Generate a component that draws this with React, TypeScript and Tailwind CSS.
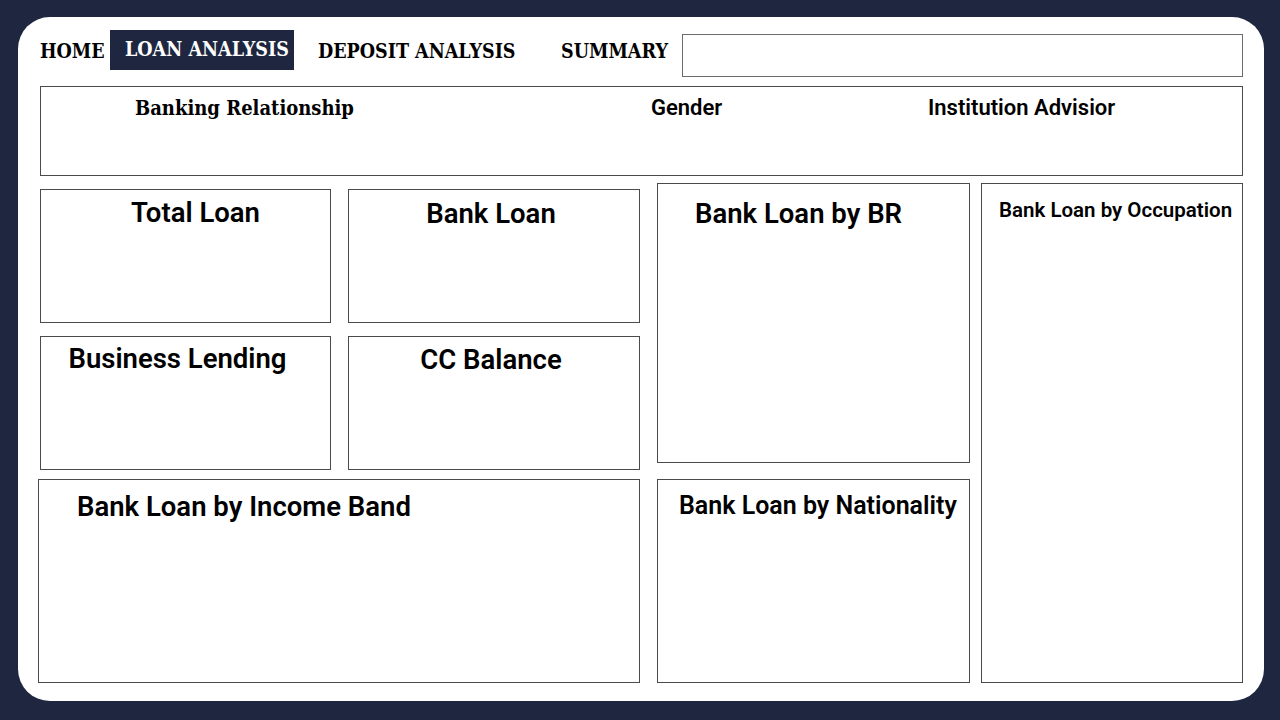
import React from "react";

const serif = "font-['DejaVu_Serif_Condensed','DejaVu_Serif',serif]";
const sans = "font-['Roboto','Liberation_Sans',sans-serif]";

export default function App() {
  return (
    <div className="w-[1280px] h-[720px] bg-[#1e2640] pt-[17px] pl-[18px] overflow-hidden">
      <div className="w-[1246px] h-[684px] bg-white rounded-[32px] flex flex-col">
        {/* Nav */}
        <div className="flex items-start pl-[22px] pt-[13px] h-[69px]">
          <div className={`${serif} font-bold text-[19.5px] text-black h-[40px] flex items-center pt-[3px] w-[70px]`}>HOME</div>
          <div className={`${serif} font-bold text-[19.5px] text-white bg-[#1e2640] h-[40px] w-[184px] flex items-center pl-[15px] pb-[1px] whitespace-nowrap`}>
            LOAN ANALYSIS
          </div>
          <div className={`${serif} font-bold text-[19.5px] text-black h-[40px] flex items-center pt-[3px] ml-[24px] w-[243px]`}>DEPOSIT ANALYSIS</div>
          <div className={`${serif} font-bold text-[19.5px] text-black h-[40px] flex items-center pt-[3px] w-[121px]`}>SUMMARY</div>
          <div className="mt-[4px] w-[561px] h-[43px] border border-[#6b6b6b]" />
        </div>

        {/* Filter box */}
        <div className="ml-[22px] w-[1203px] h-[90px] border border-[#4b4b4b] flex items-start pt-[6px]">
          <div className={`${serif} font-bold text-[20px] text-black ml-[94px] w-[516px]`}>Banking Relationship</div>
          <div className={`${sans} font-semibold text-[22px] leading-[30px] text-black w-[277px]`}>Gender</div>
          <div className={`${sans} font-semibold text-[22px] leading-[30px] text-black`}>Institution Advisior</div>
        </div>

        {/* Main */}
        <div className="flex items-start pl-[20px] mt-[7px]">
          {/* Left column */}
          <div className="w-[602px] flex flex-col">
            <div className="ml-[2px] mt-[6px] grid grid-cols-[291px_292px] grid-rows-[134px_134px] gap-x-[17px] gap-y-[13px]">
              <div className="border border-[#4b4b4b]">
                <div className={`${sans} font-semibold text-[27.5px] text-black text-center pl-[20px] pt-[5px] leading-[36px]`}>Total Loan</div>
              </div>
              <div className="border border-[#4b4b4b]">
                <div className={`${sans} font-semibold text-[27.5px] text-black text-center pr-[6px] pt-[6px] leading-[36px]`}>Bank Loan</div>
              </div>
              <div className="border border-[#4b4b4b]">
                <div className={`${sans} font-semibold text-[27.5px] text-black text-center pr-[16px] pt-[4px] leading-[36px] whitespace-nowrap`}>Business Lending</div>
              </div>
              <div className="border border-[#4b4b4b]">
                <div className={`${sans} font-semibold text-[27.5px] text-black text-center pr-[6px] pt-[5px] leading-[36px]`}>CC Balance</div>
              </div>
            </div>
            <div className="mt-[9px] h-[204px] border border-[#4b4b4b]">
              <div className={`${sans} font-semibold text-[27.5px] text-black pl-[38px] pt-[9px] leading-[36px]`}>Bank Loan by Income Band</div>
            </div>
          </div>

          {/* Middle column */}
          <div className="ml-[17px] w-[313px] flex flex-col">
            <div className="h-[280px] border border-[#4b4b4b]">
              <div className={`${sans} font-semibold text-[27.5px] text-black pl-[37px] pt-[12px] leading-[36px]`}>Bank Loan by BR</div>
            </div>
            <div className="mt-[16px] h-[204px] border border-[#4b4b4b]">
              <div className={`${sans} font-semibold text-[25px] text-black pl-[21px] pt-[9px] leading-[34px] whitespace-nowrap`}>Bank Loan by Nationality</div>
            </div>
          </div>

          {/* Right column */}
          <div className="ml-[11px] w-[262px] h-[500px] border border-[#4b4b4b]">
            <div className={`${sans} font-semibold text-[20.5px] text-black pl-[17px] pt-[12px] leading-[28px] whitespace-nowrap`}>Bank Loan by Occupation</div>
          </div>
        </div>
      </div>
    </div>
  );
}
